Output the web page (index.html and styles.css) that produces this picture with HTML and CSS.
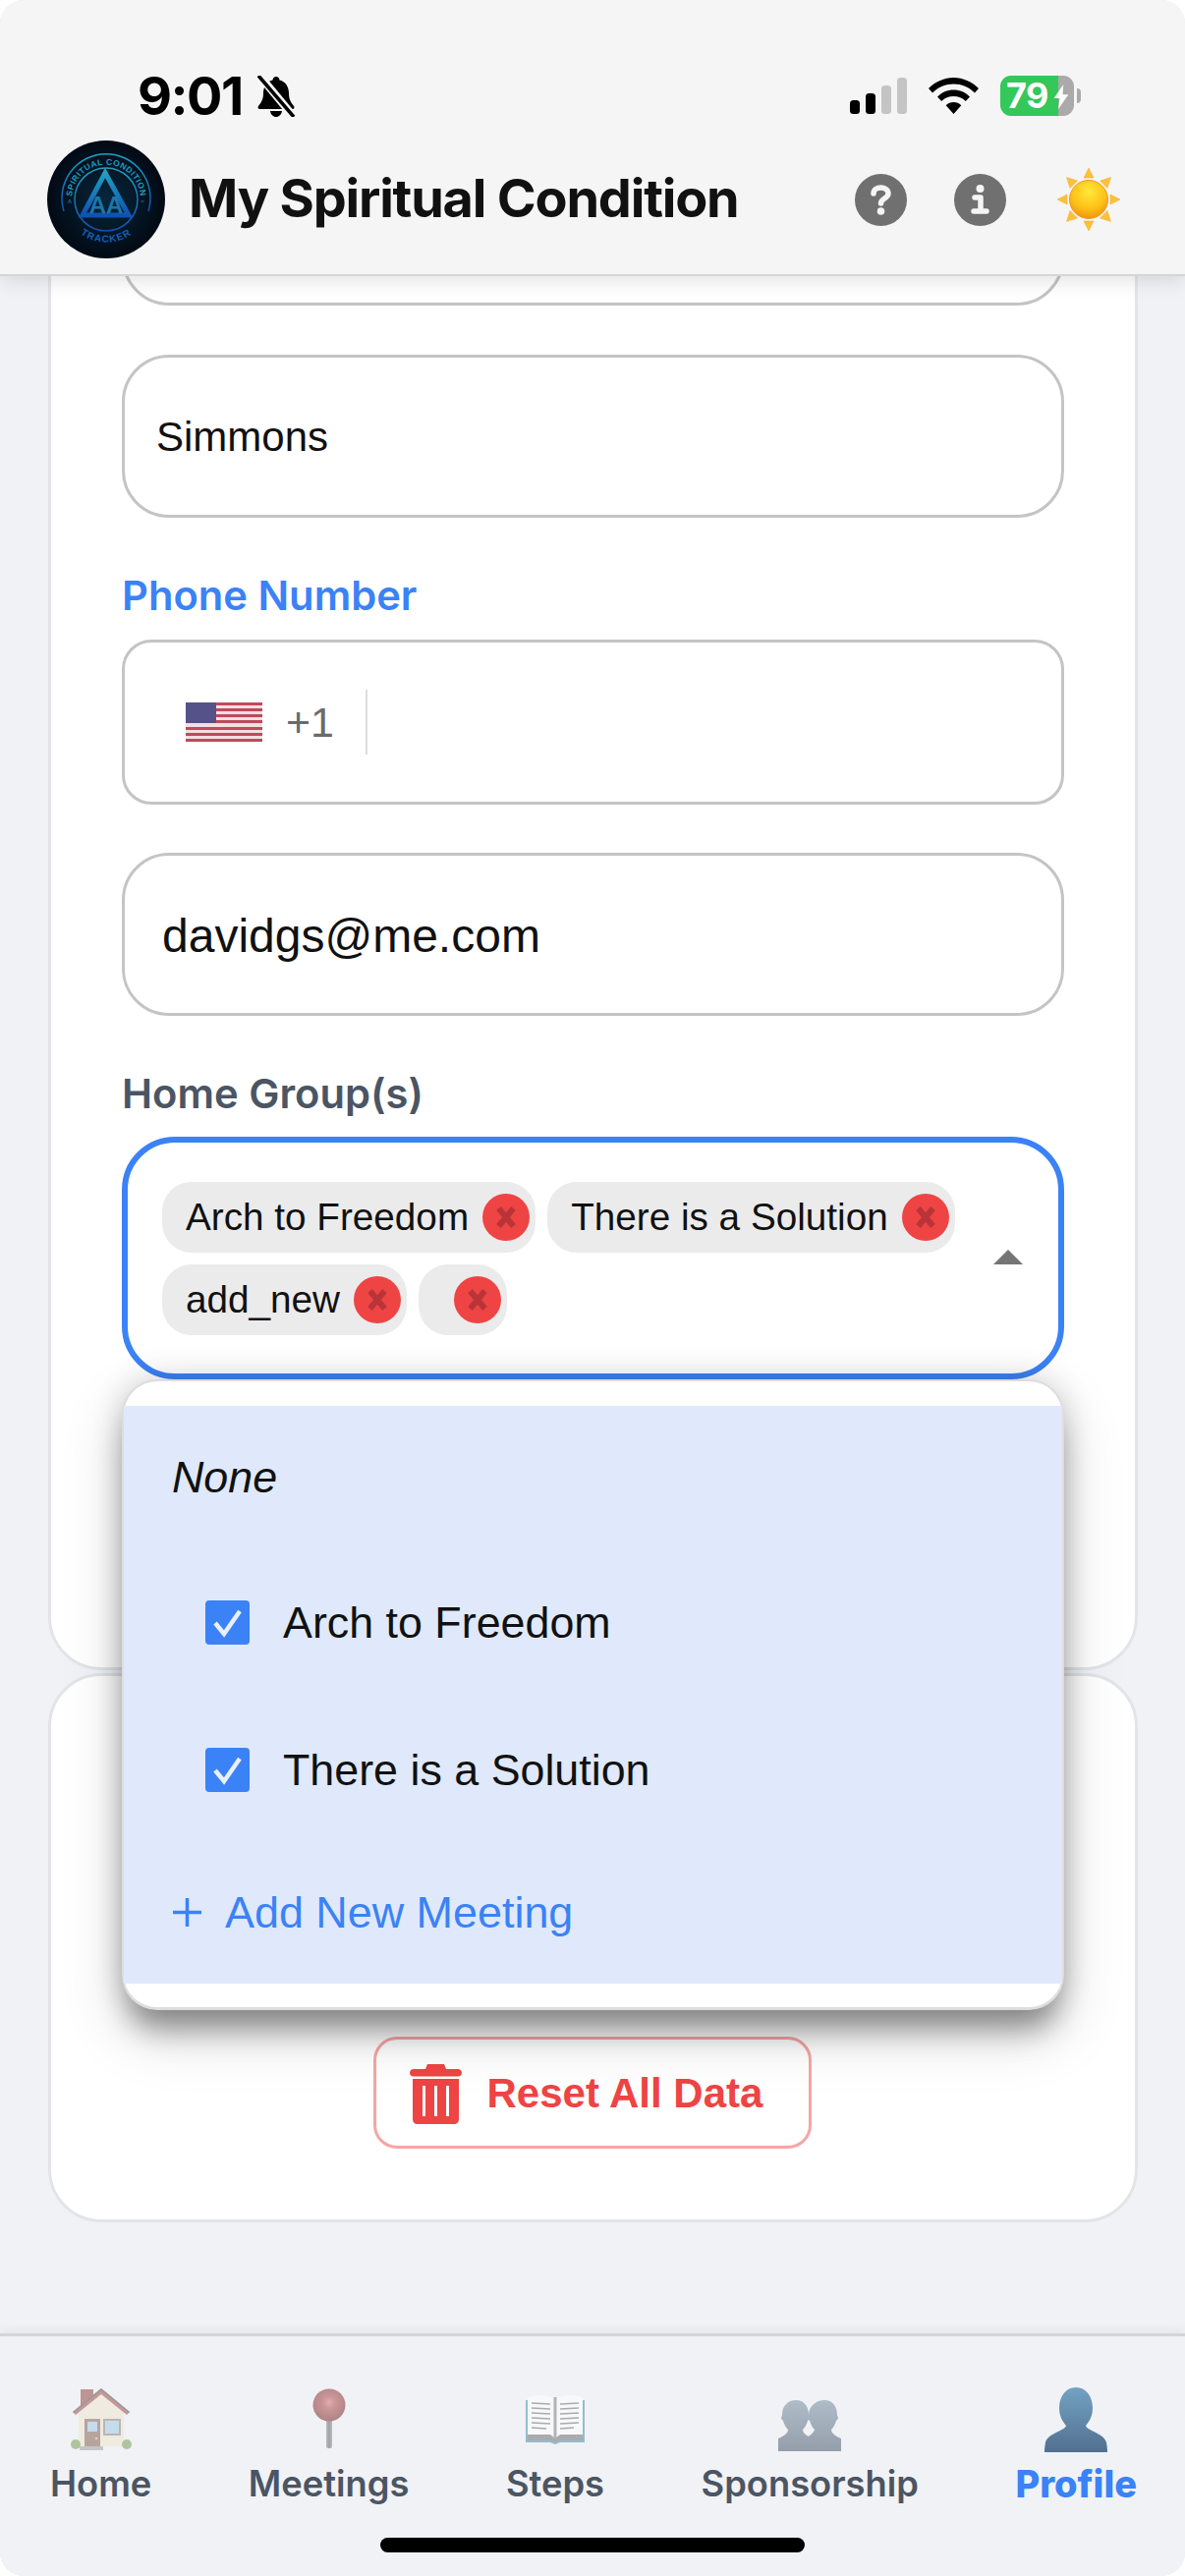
FILE: index.html
```html
<!DOCTYPE html>
<html lang="en">
<head>
<meta charset="utf-8">
<title>My Spiritual Condition</title>
<link rel="stylesheet" href="styles.css">
</head>
<body>
<div class="screen">
  <header class="topbar">
    <div class="status">
      <span class="time">9:01</span>
      <svg class="bell" viewBox="0 0 42 42"><path d="M21 1c2 0 3.200 1.500 3.500 3.500C31 6 34 12 34 18c0 6 2 9 5 13 1 1.500.5 3-1.500 3h-33C2.500 34 2 32.500 3 31c3-4 5-7 5-13 0-6 3-12 9.500-13.500C17.800 2.500 19 1 21 1zM15 36h12c-.5 3.500-3 6-6 6s-5.500-2.500-6-6z" fill="#000"/><path d="M5 1l34 41" stroke="#f5f5f5" stroke-width="8"/><path d="M3 0l36 42" stroke="#000" stroke-width="3.500"/></svg>
      <div class="status-right">
        <svg class="signal" viewBox="0 0 58 37"><rect x="0" y="23" width="10" height="14" rx="3.500" fill="#000"/><rect x="16" y="16" width="10" height="21" rx="3.500" fill="#000"/><rect x="32" y="8" width="10" height="29" rx="3.500" fill="#c4c4c4"/><rect x="48" y="0" width="10" height="37" rx="3.500" fill="#c4c4c4"/></svg>
        <svg class="wifi" viewBox="0 0 51 37"><path d="M25.500 0C35 0 44 4 51 11l-4 4.500C41 9.500 33.500 6.500 25.500 6.500S10 9.500 4 15.500L0 11C7 4 16 0 25.500 0zM25.500 12.500c6.500 0 12 2.500 16.500 7l-4.200 4.500c-3.200-3.200-7.500-5-12.300-5s-9.100 1.800-12.300 5L9 19.500c4.500-4.500 10-7 16.500-7zM25.500 25c3 0 5.500 1 7.800 3.200L25.500 37l-7.800-8.800C20 26 22.500 25 25.500 25z" fill="#000"/></svg>
        <div class="battery"><span class="battery-level">79</span>
          <svg class="bolt" viewBox="0 0 20 34"><path d="M13 0L0 19h8L6 34l14-20h-8z" fill="#fff"/></svg>
        </div>
      </div>
    </div>
    <div class="appbar">
      <svg class="logo" viewBox="0 0 120 120">
        <defs>
          <radialGradient id="logoBg"><stop offset="0" stop-color="#07263c"/><stop offset="1" stop-color="#020a14"/></radialGradient>
          <linearGradient id="logoLine" x1="0" y1="0" x2="0" y2="1"><stop offset="0" stop-color="#1fa0c0"/><stop offset="1" stop-color="#0f52b0"/></linearGradient>
          <path id="arcTop" d="M26 68a35 35 0 1 1 68 0"/>
          <path id="arcBottom" d="M18 72a43.700 43.700 0 0 0 84 0"/>
        </defs>
        <circle cx="60" cy="60" r="60" fill="url(#logoBg)"/>
        <path d="M17 72a45 45 0 1 1 86 0" fill="none" stroke="url(#logoLine)" stroke-width="1.500"/>
        <circle cx="60" cy="60" r="32" fill="none" stroke="url(#logoLine)" stroke-width="1.500"/>
        <text class="logo-arc"><textPath href="#arcTop" startOffset="50%" text-anchor="middle">SPIRITUAL CONDITION</textPath></text>
        <text class="logo-arc logo-bottom"><textPath href="#arcBottom" startOffset="50%" text-anchor="middle">TRACKER</textPath></text>
        <text class="logo-side" x="23" y="64" text-anchor="middle">A</text>
        <text class="logo-side" x="97" y="64" text-anchor="middle">=</text>
        <path d="M59 33L36 76h47z" fill="none" stroke="url(#logoLine)" stroke-width="5"/>
        <text class="logo-aa" x="60" y="74" text-anchor="middle">AA</text>
      </svg>
      <h1 class="title">My Spiritual Condition</h1>
      <svg class="round-icon" viewBox="0 0 53 53"><circle cx="26.500" cy="26.500" r="26.500" fill="#707070"/><path d="M19 20c0-4 3.500-6 7.500-6s7.500 2.500 7.500 6c0 5-7.500 5-7.500 10" fill="none" stroke="#f5f5f5" stroke-width="5.500" stroke-linecap="round"/><circle cx="26.500" cy="38" r="3.800" fill="#f5f5f5"/></svg>
      <svg class="round-icon round-gap" viewBox="0 0 53 53"><circle cx="26.500" cy="26.500" r="26.500" fill="#707070"/><circle cx="26.500" cy="15" r="4" fill="#f5f5f5"/><path d="M21 24h6v14M20 38h13" fill="none" stroke="#f5f5f5" stroke-width="5.500" stroke-linecap="round" stroke-linejoin="round"/></svg>
      <svg class="sun" viewBox="0 0 64 64">
        <defs><radialGradient id="sunFill" cx=".5" cy=".3" r=".75"><stop offset="0" stop-color="#ffe83a"/><stop offset=".6" stop-color="#fdc116"/><stop offset="1" stop-color="#f08a0c"/></radialGradient></defs>
        <g fill="#fcc13c" stroke="#f6a821" stroke-width=".5">
          <path d="M32 0l5 10H27z"/><path d="M32 64l-5-10h10z"/><path d="M0 32l10-5v10z"/><path d="M64 32l-10 5V27z"/>
          <path d="M9.500 9.500l11 3.500-7.500 7.500z"/><path d="M54.500 9.500L51 20.500 43.500 13z"/><path d="M9.500 54.500L13 43.500l7.500 7.500z"/><path d="M54.500 54.500l-11-3.500 7.500-7.500z"/>
        </g>
        <circle cx="32" cy="32" r="19.500" fill="url(#sunFill)" stroke="#ef9a2a" stroke-width="1"/>
      </svg>
    </div>
  </header>

  <main class="content">
    <section class="card card-profile">
      <div class="input">&nbsp;</div>
      <div class="input input-spaced input-name">Simmons</div>
      <label class="label label-active">Phone Number</label>
      <div class="phone">
        <svg class="flag" viewBox="0 0 78 40" preserveAspectRatio="none">
          <rect width="78" height="40" fill="#f3dfe2"/>
          <g fill="#bf4a5c"><rect y="0" width="78" height="3"/><rect y="6" width="78" height="3"/><rect y="12" width="78" height="3"/><rect y="18" width="78" height="3"/><rect y="25" width="78" height="3"/><rect y="31" width="78" height="3"/><rect y="37" width="78" height="3"/></g>
          <rect width="31" height="21" fill="#55528a"/>
        </svg>
        <span class="dial">+1</span>
        <span class="divider"></span>
      </div>
      <div class="input input-spaced input-email">davidgs@me.com</div>
      <label class="label">Home Group(s)</label>
      <div class="select-wrap">
        <div class="select">
          <div class="chips">
            <span class="chip">Arch to Freedom<svg class="chip-x" viewBox="0 0 48 48"><circle cx="24" cy="24" r="24" fill="#ef4444"/><path d="M16.500 15l15 18M31.500 15l-15 18" stroke="#b93438" stroke-width="6"/></svg></span>
            <span class="chip">There is a Solution<svg class="chip-x" viewBox="0 0 48 48"><circle cx="24" cy="24" r="24" fill="#ef4444"/><path d="M16.500 15l15 18M31.500 15l-15 18" stroke="#b93438" stroke-width="6"/></svg></span>
            <span class="chip">add_new<svg class="chip-x" viewBox="0 0 48 48"><circle cx="24" cy="24" r="24" fill="#ef4444"/><path d="M16.500 15l15 18M31.500 15l-15 18" stroke="#b93438" stroke-width="6"/></svg></span>
            <span class="chip chip-empty"><svg class="chip-x" viewBox="0 0 48 48"><circle cx="24" cy="24" r="24" fill="#ef4444"/><path d="M16.500 15l15 18M31.500 15l-15 18" stroke="#b93438" stroke-width="6"/></svg></span>
          </div>
          <span class="caret"></span>
        </div>
        <div class="menu">
          <div class="menu-list">
            <div class="option option-none">None</div>
            <div class="option option-check"><span class="box"><svg viewBox="0 0 45 45"><path d="M10 23l9 11 16-23" fill="none" stroke="#e8f0fe" stroke-width="4.500"/></svg></span>Arch to Freedom</div>
            <div class="option option-check"><span class="box"><svg viewBox="0 0 45 45"><path d="M10 23l9 11 16-23" fill="none" stroke="#e8f0fe" stroke-width="4.500"/></svg></span>There is a Solution</div>
            <div class="option option-add"><svg class="plus" viewBox="0 0 29 29"><path d="M14.500 0v29M0 14.500h29" stroke="#3b82f6" stroke-width="3.500"/></svg>Add New Meeting</div>
          </div>
        </div>
      </div>
    </section>
    <section class="card card-reset">
      <button class="reset">
        <svg class="trash" viewBox="0 0 53 61"><path d="M18 0h17l2 5h12c2 0 4 1.500 4 4s-2 3.500-4 3.500H4c-2 0-4-1-4-3.500s2-4 4-4h12z" fill="#ef4444"/><path fill-rule="evenodd" d="M3 15h47v41c0 3-2 5-5 5H8c-3 0-5-2-5-5zM13 22v31h3V22zM25 22v31h3V22zM37 22v31h3V22z" fill="#ef4444"/></svg>
        Reset All Data
      </button>
    </section>
  </main>

  <nav class="tabs">
    <a class="tab">
      <svg class="tab-icon dim" viewBox="0 0 66 66"><rect x="12" y="2" width="13" height="20" fill="#8a3a34"/><path d="M10 24L33 4l23 20v36H10z" fill="#f1e6cd"/><path d="M33 1L4 25l3 3L33 7l26 21 3-3z" fill="#9c3f3a"/><path d="M33 1L4 25l1 1L33 3l28 23 1-1z" fill="#444"/><rect x="16" y="32" width="16" height="29" fill="#7d5a4a"/><rect x="19" y="35" width="10" height="10" fill="#9cc8e4"/><circle cx="28" cy="52" r="1.200" fill="#e8c060"/><rect x="35" y="32" width="18" height="17" fill="#8a7a70"/><rect x="37" y="34" width="14" height="13" fill="#9cc8e4"/><circle cx="7" cy="58" r="5" fill="#6f9a45"/><circle cx="59" cy="58" r="5" fill="#6f9a45"/><rect x="11" y="60" width="24" height="4" fill="#999"/></svg>
      <span class="tab-label">Home</span>
    </a>
    <a class="tab">
      <svg class="tab-icon dim" viewBox="0 0 66 66"><defs><linearGradient id="needle" x1="0" y1="0" x2="1" y2="0"><stop offset="0" stop-color="#888"/><stop offset=".5" stop-color="#555"/><stop offset="1" stop-color="#888"/></linearGradient><radialGradient id="pinFill" cx=".5" cy=".42" r=".6"><stop offset="0" stop-color="#d46a6a"/><stop offset=".35" stop-color="#a53a3a"/><stop offset="1" stop-color="#6e1414"/></radialGradient></defs><rect x="30" y="30" width="6" height="32" rx="2" fill="url(#needle)"/><circle cx="33" cy="18" r="16.500" fill="url(#pinFill)"/></svg>
      <span class="tab-label">Meetings</span>
    </a>
    <a class="tab">
      <svg class="tab-icon dim" viewBox="0 0 66 66"><path d="M3 13h60v43H38l-5 2-5-2H3z" fill="#3d87a8"/><path d="M5 10c10-3 20-2 27 1v42c-8-2-18-3-27-1z" fill="#fff"/><path d="M61 10c-10-3-20-2-27 1v42c8-2 18-3 27-1z" fill="#fff"/><path d="M5 48h23l5 4 5-4h23v6H38l-5 2-5-2H5z" fill="#666"/><rect x="31.500" y="10" width="3" height="42" fill="#777"/><g stroke="#666" stroke-width="1.300"><path d="M9 16l19 1M9 21l19 1M9 26l19 1M9 31l19 1M9 36l19 1M9 41l15 1M57 16l-19 1M57 21l-19 1M57 26l-19 1M57 31l-19 1M57 36l-19 1M52 41l-14 1"/></g></svg>
      <span class="tab-label">Steps</span>
    </a>
    <a class="tab">
      <svg class="tab-icon dim" viewBox="0 0 66 66"><defs><linearGradient id="busts" x1="0" y1="0" x2="0" y2="1"><stop offset="0" stop-color="#70879c"/><stop offset="1" stop-color="#3c4e62"/></linearGradient></defs><path d="M48 13c8 0 13 6 13 15 0 1 1 2 1 3s-1 2-2 3c-1 4-3 7-5 9 0 3 3 6 10 9v13H28V52c6-3 9-6 10-9-3-3-4-6-5-9-1-1-2-2-2-3s1-2 1-3c0-9 8-15 16-15z" fill="url(#busts)"/><path d="M19 13c8 0 13 6 13 15 0 1 1 2 1 3s-1 2-2 3c-1 4-3 7-5 9 0 3 3 6 10 9v13H1V52c7-3 10-6 10-9-2-2-4-5-5-9-1-1-2-2-2-3s1-2 1-3C5 19 11 13 19 13z" fill="url(#busts)"/></svg>
      <span class="tab-label">Sponsorship</span>
    </a>
    <a class="tab">
      <svg class="tab-icon bright" viewBox="0 0 66 66"><defs><linearGradient id="bust" x1="0" y1="0" x2="0" y2="1"><stop offset="0" stop-color="#3f81ad"/><stop offset="1" stop-color="#103a66"/></linearGradient></defs><path d="M33 0c10 0 17 9 17 21 0 9-4 14-7 18 1 5 19 8 21 17 .5 3 1 6 1 10H1c0-4 .5-7 1-10 2-9 20-12 21-17-3-4-7-9-7-18C16 9 23 0 33 0z" fill="url(#bust)"/></svg>
      <span class="tab-label tab-active">Profile</span>
    </a>
    <span class="home-bar"></span>
  </nav>
</div>
</body>
</html>
```

FILE: styles.css
```css
* { box-sizing: border-box; }
html, body { margin: 0; padding: 0; background: #fff; }
body { font-family: "Liberation Sans", Arial, sans-serif; color: #111; }
.screen {
  width: 1206px; height: 2622px; display: flex; flex-direction: column;
  background: #f0f2f6; border-radius: 24px; overflow: hidden; position: relative;
}

/* header */
.topbar {
  height: 281px; padding-top: 77px; background: #f5f5f5; flex: none;
  border-bottom: 2px solid #d6d6d6; box-shadow: 0 4px 20px rgba(0,0,0,.12);
  position: relative; z-index: 5;
}
.status { height: 41px; display: flex; align-items: center; padding: 0 113px 0 140px; }
.time { font: 700 54px/41px Inter, sans-serif; color: #000; letter-spacing: -1.500px; }
.bell { width: 42px; height: 42px; margin-left: 13px; }
.status-right { margin-left: auto; display: flex; align-items: center; }
.signal { width: 58px; height: 37px; }
.wifi { width: 51px; height: 37px; margin-left: 22px; }
.battery {
  width: 75px; height: 41px; margin-left: 22px; border-radius: 11px; position: relative;
  background: linear-gradient(90deg, #34c759 0 59px, #aaa 59px);
  color: #fff; font: 700 36px/41px Inter, sans-serif; padding-left: 6px; letter-spacing: -.5px;
}
.battery::after {
  content: ""; position: absolute; left: 78px; top: 13px; width: 4px; height: 15px;
  background: #aaa; border-radius: 0 4px 4px 0;
}
.battery-level { display: block; }
.bolt { position: absolute; left: 53px; top: 9px; width: 18px; height: 25px; }
.appbar { height: 120px; margin-top: 25px; padding-left: 48px; display: flex; align-items: center; }
.logo { width: 120px; height: 120px; flex: none; }
.logo-arc { font: 700 8.500px "Liberation Sans", sans-serif; fill: #1b9cc0; letter-spacing: .5px; }
.logo-bottom { fill: #1260b8; font-size: 10px; letter-spacing: 1px; }
.logo-side { font: 700 6px "Liberation Sans", sans-serif; fill: #14699a; }
.logo-aa { font: 700 24px "Liberation Sans", sans-serif; fill: #1a76ad; }
.title { font: 700 54px/1 Inter, sans-serif; color: #111; margin: -2px auto 0 24px; letter-spacing: -1.200px; }
.round-icon { width: 53px; height: 53px; flex: none; }
.round-gap { margin-left: 48px; }
.sun { width: 64px; height: 64px; margin: 0 66px 0 52px; flex: none; }

/* content */
.content { flex: 1; overflow: hidden; padding: 0 48px 0 49px; }
.card { background: #fff; border: 3px solid #e3e4e8; border-radius: 54px; padding: 0 72px; }
.card-profile { margin-top: -184px; padding-top: 45px; padding-bottom: 293px; }
.card-reset { margin-top: 3px; height: 559px; padding-top: 367px; display: flex; justify-content: center; }
.input {
  height: 166px; border: 3px solid #c4c4c4; border-radius: 48px; background: #fff;
  display: flex; align-items: center; color: #111;
}
.input-spaced { margin-top: 50px; }
.input-name { font-size: 42px; padding: 2px 0 0 32px; }
.input-email { font-size: 48px; padding: 2px 0 0 38px; margin-top: 49px; }
.label { display: block; font: 600 41.700px/46px Inter, sans-serif; color: #4b5563; margin: 56px 0 21px; }
.label-active { color: #3b82f6; margin-bottom: 22px; }
.phone {
  height: 168px; border: 3px solid #c4c4c4; border-radius: 30px; background: #fff;
  display: flex; align-items: center; padding-left: 62px;
}
.flag { width: 78px; height: 40px; flex: none; }
.dial { font-size: 43px; color: #6b6b6b; margin-left: 24px; }
.divider { width: 2px; height: 66px; background: #dedede; margin-left: 32px; }

.select-wrap { position: relative; }
.select {
  height: 247px; border: 6px solid #3b82f6; border-radius: 54px; background: #fff;
  display: flex; align-items: center; padding: 0 36px 0 35px;
}
.chips { display: flex; flex-wrap: wrap; gap: 12px; flex: 1; align-content: center; }
.chip {
  height: 72px; border-radius: 30px; background: #ebebeb; padding: 0 6px 0 24px;
  display: inline-flex; align-items: center; font-size: 38.700px; color: #111; white-space: nowrap;
}
.chip-x { width: 48px; height: 48px; margin-left: 14px; flex: none; }
.chip-empty .chip-x { margin-left: 12px; }
.caret {
  width: 0; height: 0; border-left: 15px solid transparent; border-right: 15px solid transparent;
  border-bottom: 15px solid #757575; margin-top: -2px; flex: none;
}
.menu {
  position: absolute; left: 0; right: 0; top: 100%; height: 642px; padding: 25px 0;
  background: #fff; border: 2px solid #dddddd; border-bottom-width: 3px; border-radius: 36px;
  box-shadow: 0 28px 30px -8px rgba(0,0,0,.36), 0 24px 60px 6px rgba(0,0,0,.12), 0 0 30px 2px rgba(0,0,0,.14);
  z-index: 3;
}
.menu-list { background: #dfe9fb; height: 588px; }
.option { height: 150px; display: flex; align-items: center; font-size: 44.800px; color: #111; }
.option-none { height: 145px; font-style: italic; font-size: 44.800px; padding-left: 49px; }
.option-check { padding-left: 83px; }
.option-add { height: 141px; color: #3b82f6; font-size: 44.900px; padding-left: 50px; }
.box { width: 45px; height: 45px; background: #3b82f6; border-radius: 4px; margin-right: 34px; display: block; flex: none; }
.box svg { display: block; width: 45px; height: 45px; }
.plus { width: 29px; height: 29px; margin-right: 24px; flex: none; }

.reset {
  width: 446px; height: 114px; border: 3px solid #f8a5a5; border-radius: 24px; background: transparent;
  font: 700 42px "Liberation Sans", sans-serif; color: #ef4444; display: flex; align-items: center;
  padding: 2px 0 0 34px; white-space: nowrap; position: relative; margin-left: -2px;
}
.trash { width: 53px; height: 61px; margin-right: 26px; flex: none; }

/* tabs */
.tabs {
  height: 247px; flex: none; background: #f0f2f6; border-top: 3px solid #d4d5d8;
  box-shadow: 0 -4px 10px rgba(0,0,0,.05); position: relative; z-index: 5;
  display: flex; justify-content: space-between; padding: 52px 49px 0 51px;
}
.tab { display: flex; flex-direction: column; align-items: center; }
.tab-icon { width: 66px; height: 66px; flex: none; }
.dim { opacity: .5; }
.bright { opacity: .7; }
.tab-label { font: 600 36.300px/44px Inter, sans-serif; color: #4b5563; margin-top: 10px; white-space: nowrap; }
.tab-active { color: #3b82f6; font-weight: 800; font-size: 38px; }
.home-bar {
  position: absolute; left: 387px; bottom: 24px; width: 432px; height: 15px; background: #000; border-radius: 8px;
}
```
